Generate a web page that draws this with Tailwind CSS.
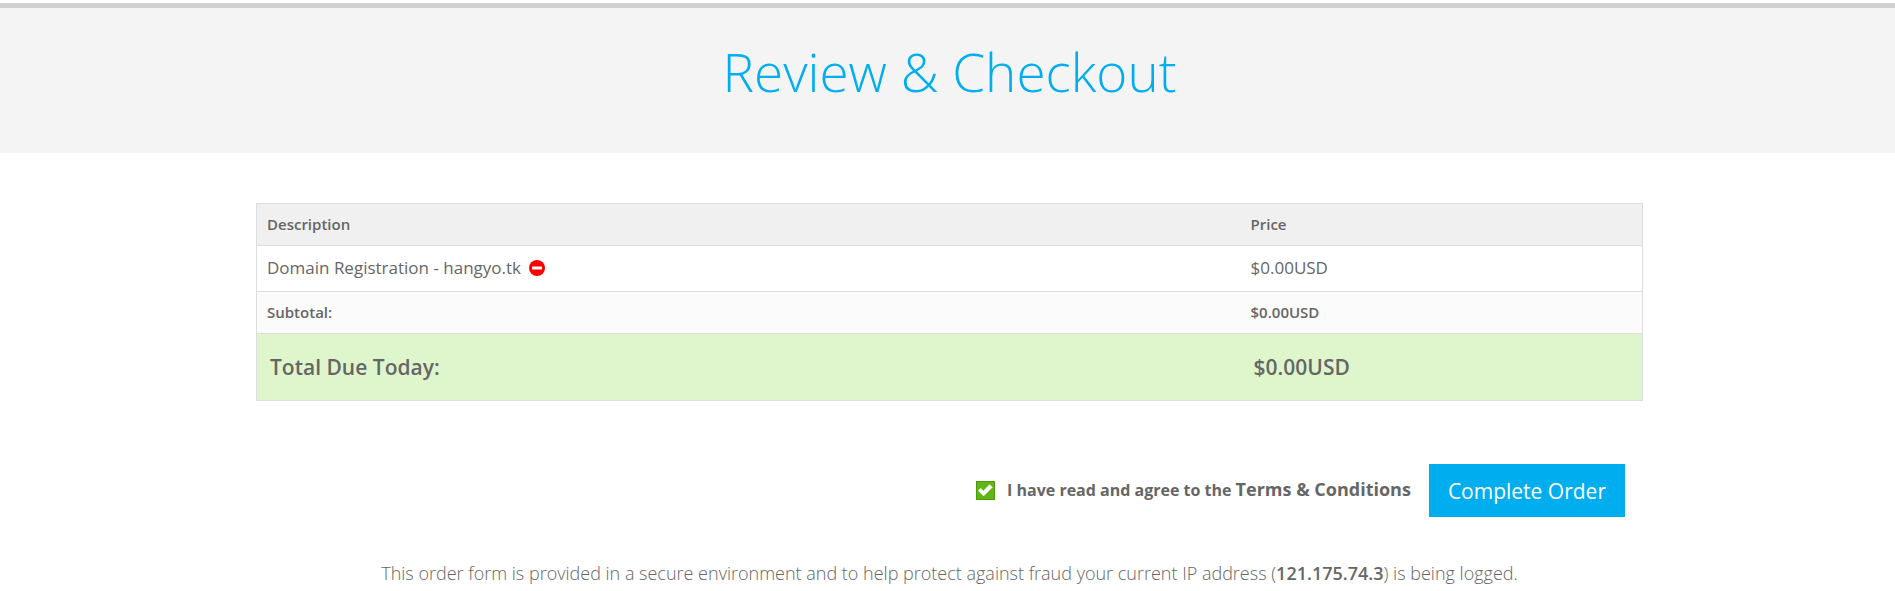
<!DOCTYPE html>
<html lang="en">
<head>
<meta charset="utf-8">
<meta name="viewport" content="width=device-width, initial-scale=1">
<title>Review &amp; Checkout</title>
<script src="https://cdn.jsdelivr.net/npm/@tailwindcss/browser@4"></script>
</head>
<body class="bg-white font-['Open_Sans','Noto_Sans',sans-serif] text-[#666666]">
<header class="mt-[3px] border-t-[5px] border-[#d0d0d0] bg-[#f4f4f4] pt-7 pb-[45px] pl-1 text-center">
  <h1 class="text-[53px] leading-[72px] font-light text-[#00aeef]">Review &amp; Checkout</h1>
</header>
<main class="pt-[50px] pb-2 pl-1">
  <form class="mx-auto max-w-[1387px]">
    <table class="w-full table-fixed border-collapse border border-[#dddddd] text-left">
      <thead>
        <tr class="h-[42px] border-b border-[#dddddd] bg-[#f0f0f0] text-[15px] leading-5">
          <th scope="col" class="w-[71%] px-[10px] pb-[2px] font-semibold">Description</th>
          <th scope="col" class="px-[10px] pb-[2px] font-semibold">Price</th>
        </tr>
      </thead>
      <tbody>
        <tr class="h-[46px] border-b border-[#dddddd] text-[17px] leading-6">
          <td class="px-[10px] pb-[2px]">
            <div class="flex items-center gap-2">
              <span>Domain Registration - hangyo.tk</span>
              <button type="button" aria-label="Remove" class="shrink-0">
                <svg class="block size-4" viewBox="0 0 16 16"><circle cx="8" cy="8" r="8" fill="#ff0000"/><rect x="3" y="6.5" width="10" height="3" rx=".5" fill="#fff"/></svg>
              </button>
            </div>
          </td>
          <td class="px-[10px] pb-[2px]">$0.00USD</td>
        </tr>
        <tr class="h-[42px] border-b border-[#dddddd] bg-[#fbfbfb] text-[15px] leading-5 font-semibold">
          <td class="px-[10px] pb-[2px]">Subtotal:</td>
          <td class="px-[10px] pb-[2px]">$0.00USD</td>
        </tr>
        <tr class="h-[67px] bg-[#dff6cd] text-[21px] leading-7 font-semibold">
          <td class="px-[13px]">Total Due Today:</td>
          <td class="px-[13px]">$0.00USD</td>
        </tr>
      </tbody>
    </table>
    <div class="mt-[63px] flex items-center justify-end gap-[18px] pr-[18px]">
      <div class="flex items-center gap-3">
        <span class="relative block size-[19px]">
          <input id="agree" type="checkbox" checked class="peer block size-full appearance-none border border-[#4f9a0c] bg-white checked:bg-[#61b516]">
          <svg class="pointer-events-none absolute inset-0 hidden size-full peer-checked:block" viewBox="0 0 19 19"><path d="M2.3 9.6 4.6 7.4 7.4 10 13.5 3.7 16.3 6.2 7.6 14.9Z" fill="#fff" stroke="#fff" stroke-width=".6" stroke-linejoin="round"/></svg>
        </span>
        <label for="agree" class="pb-[2px] text-base leading-6 font-bold">I have read and agree to the <a href="#terms" class="text-[18px]">Terms &amp; Conditions</a></label>
      </div>
      <button type="submit" class="h-[53px] bg-[#00aeef] px-[19px] text-[21px] leading-7 text-white">Complete Order</button>
    </div>
    <p class="mt-11 text-center text-[18px] leading-6 font-light">This order form is provided in a secure environment and to help protect against fraud your current IP address (<strong class="font-semibold">121.175.74.3</strong>) is being logged.</p>
  </form>
</main>
</body>
</html>
